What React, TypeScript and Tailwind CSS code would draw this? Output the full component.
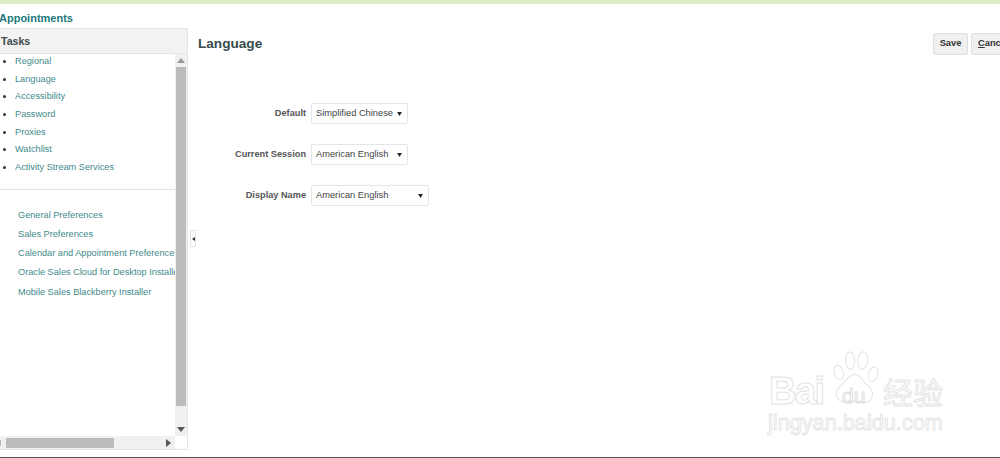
import React from "react";

const tasks = [
  "Regional",
  "Language",
  "Accessibility",
  "Password",
  "Proxies",
  "Watchlist",
  "Activity Stream Services",
];

const links = [
  "General Preferences",
  "Sales Preferences",
  "Calendar and Appointment Preferences",
  "Oracle Sales Cloud for Desktop Installer",
  "Mobile Sales Blackberry Installer",
];

const fields = [
  { label: "Default", value: "Simplified Chinese", width: "w-[97px]" },
  { label: "Current Session", value: "American English", width: "w-[97px]" },
  { label: "Display Name", value: "American English", width: "w-[118px]" },
];

const Caret: React.FC<{ dir: "up" | "down" | "left" | "right"; color?: string }> = ({ dir, color = "#555" }) => {
  const points = {
    up: "0,5 4,0 8,5",
    down: "0,0 8,0 4,5",
    left: "3,0 3,4 0,2",
    right: "0,0 0,8 5,4",
  }[dir];
  const box = dir === "up" || dir === "down" ? "0 0 8 5" : dir === "left" ? "0 0 3 4" : "0 0 5 8";
  const size = dir === "up" || dir === "down" ? "w-2 h-[5px]" : dir === "left" ? "w-[3px] h-1" : "w-[5px] h-2";
  return (
    <svg viewBox={box} className={size}>
      <polygon points={points} fill={color} />
    </svg>
  );
};

const Watermark: React.FC = () => (
  <div className="absolute left-[766px] top-[349px] w-[190px] h-[90px] pointer-events-none font-['Liberation_Sans','Noto_Sans_CJK_SC',sans-serif]">
    <span className="absolute left-[3px] top-[18px] text-[38px] leading-[48px] font-bold tracking-[-1.5px] text-transparent [-webkit-text-stroke:1px_#e4e4e4]">Bai</span>
    <svg viewBox="0 0 70 66" preserveAspectRatio="none" className="absolute left-[64px] top-[2px] w-[52px] h-[57px]" fill="white" stroke="#e4e4e4" strokeWidth="1.3">
      <ellipse cx="12" cy="25" rx="6" ry="9" transform="rotate(-25 12 25)" />
      <ellipse cx="27" cy="11" rx="6" ry="10" />
      <ellipse cx="44" cy="11" rx="6.5" ry="10" transform="rotate(8 44 11)" />
      <ellipse cx="58" cy="27" rx="6" ry="9" transform="rotate(25 58 27)" />
      <path d="M34 27c7 0 9 7 14 11 7 4 10 8 9 13-2 9-9 9-14 8-5-1-12-1-17 0-6 1-14 1-17-7-1-5 2-10 8-14 5-4 10-11 17-11z" />
    </svg>
    <span className="absolute left-[76px] top-[35px] text-[21px] leading-[24px] text-transparent [-webkit-text-stroke:1px_#e0e0e0]">du</span>
    <span className="absolute left-[117px] top-[28px] text-[30px] leading-[34px] text-transparent [-webkit-text-stroke:1px_#e4e4e4]">经验</span>
    <span className="absolute left-[2px] top-[62px] text-[21.7px] leading-[24px] text-transparent [-webkit-text-stroke:1px_#e6e6e6]">jingyan.baidu.com</span>
  </div>
);

export default function App() {
  return (
    <div className="relative w-[1000px] h-[458px] overflow-hidden bg-white font-['Liberation_Sans',Arial,sans-serif] text-[9.2px] flex flex-col">
      <div className="h-1 bg-[#dcecc7] shrink-0" />
      <div className="h-6 shrink-0 flex items-center -ml-px pt-[3px]">
        <span className="text-[11px] leading-4 font-bold text-[#217a7c]">Appointments</span>
      </div>
      <div className="flex-1 flex min-h-0">
        {/* Tasks panel */}
        <aside className="w-[188px] h-[422px] shrink-0 border border-l-0 border-[#e4e6e6] flex flex-col">
          <div className="h-[25px] shrink-0 bg-[#f2f2f2] border-b border-[#e6e6e6] flex items-center pl-px pt-px">
            <h2 className="text-[10.6px] font-bold text-[#3a4a4a]">Tasks</h2>
          </div>
          <div className="flex-1 min-h-0 flex">
            <div className="w-[175px] overflow-hidden shrink-0 flex flex-col">
              <ul className="list-disc pl-[15px] -mt-px text-[#3f8a8b] whitespace-nowrap">
                {tasks.map((t) => (
                  <li key={t} className="h-[17.7px] leading-[17.7px] marker:text-[#333]">
                    {t}
                  </li>
                ))}
              </ul>
              <div className="mt-[12px] border-t border-[#e3e3e3]" />
              <div className="pl-[18px] pt-[16px] flex flex-col text-[#3f8a8b] whitespace-nowrap">
                {links.map((l) => (
                  <a key={l} className="h-[19.2px] leading-[19.2px]">
                    {l}
                  </a>
                ))}
              </div>
            </div>
            {/* Vertical scrollbar */}
            <div className="w-[12px] bg-[#f0f0f0] flex flex-col items-center">
              <div className="h-[13px] flex items-center justify-center">
                <Caret dir="up" color="#9a9a9a" />
              </div>
              <div className="w-[10px] h-[339px] bg-[#bcbcbc]" />
              <div className="flex-1 flex items-end justify-center pb-1">
                <Caret dir="down" />
              </div>
            </div>
          </div>
          {/* Horizontal scrollbar */}
          <div className="h-[13px] shrink-0 flex">
            <div className="w-[175px] bg-[#f0f0f0] flex items-center">
              <div className="w-[6px] flex items-center">
                <div className="w-[1px] h-[6px] bg-[#b5b5b5]" />
              </div>
              <div className="w-[108px] h-[10px] bg-[#bcbcbc]" />
              <div className="flex-1 flex justify-end pr-[4px]">
                <Caret dir="right" />
              </div>
            </div>
            <div className="w-[12px] bg-white" />
          </div>
        </aside>

        {/* Splitter */}
        <div className="w-[9px] shrink-0 flex items-start pl-[2px] pt-[202px]">
          <div className="w-[6px] h-[17px] border border-[#dfe5ea] flex items-center justify-center">
            <Caret dir="left" color="#333" />
          </div>
        </div>

        {/* Language form */}
        <main className="flex-1 min-w-0 pl-px">
          <div className="flex items-start justify-between pt-[5px]">
            <h1 className="text-[13.6px] leading-5 font-bold text-[#354b4b] mt-px">Language</h1>
            <div className="flex gap-[3px] shrink-0 w-[67px]">
              <button className="shrink-0 w-[35px] h-[22px] rounded-[2px] bg-[#f0f0f0] border border-[#dadfe2] text-[9.3px] font-bold text-[#333]">
                Save
              </button>
              <button className="shrink-0 w-[50px] h-[22px] rounded-[2px] bg-[#f0f0f0] border border-[#dadfe2] text-[9.3px] font-bold text-[#333] text-left pl-[6px]">
                <span className="underline">C</span>ancel
              </button>
            </div>
          </div>
          <div className="mt-[48px] flex flex-col gap-[20px]">
            {fields.map((f) => (
              <div key={f.label} className="flex items-center h-[21px]">
                <label className="w-[108px] text-right font-bold text-[#555] text-[9.2px]">{f.label}</label>
                <div className="pl-[5px] shrink-0">
                  <div className={`${f.width} h-[21px] border border-[#e3e6e8] rounded-[2px] bg-white flex items-center justify-between pl-1 pr-[5px] text-[#444] text-[9.3px] whitespace-nowrap`}>
                    <span>{f.value}</span>
                    <svg viewBox="0 0 6 5" className="w-[5px] h-1">
                      <polygon points="0,0 6,0 3,5" fill="#222" />
                    </svg>
                  </div>
                </div>
              </div>
            ))}
          </div>
        </main>
      </div>
      <Watermark />
      <div className="absolute left-0 right-0 bottom-0 h-px bg-[#555]" />
    </div>
  );
}
